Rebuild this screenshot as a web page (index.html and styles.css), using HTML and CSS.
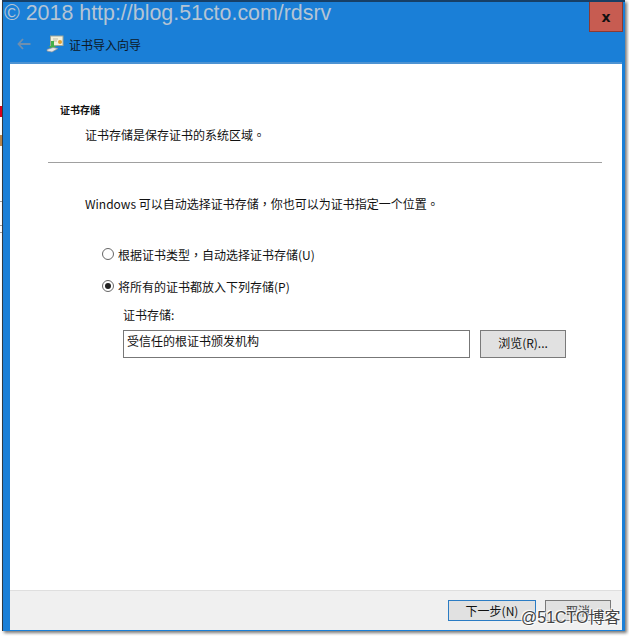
FILE: index.html
```html
<!DOCTYPE html>
<html lang="en">
<head>
  <meta charset="UTF-8" />
  <title>证书导入向导</title>
  <link rel="stylesheet" href="styles.css">
</head>
<body>
  <div class="desk-bit red"></div>
  <div class="desk-bit tan"></div>
  <div class="desk-line l1"></div>
  <div class="desk-line l2"></div>
  <div class="desk-line l3"></div>

  <div class="window">
    <div class="titlebar">
      <button class="close">x</button>
      <div class="nav">
        <svg class="back" width="14" height="12" viewBox="0 0 14 12">
          <path d="M6 1 L1.5 6 L6 11 M2 6 H13.5" fill="none" stroke="#6f8fae" stroke-width="1.8"/>
        </svg>
        <svg class="cert" width="18" height="18" viewBox="0 0 18 18">
          <rect x="4.5" y="1" width="12.5" height="9.5" fill="#f4f1dc" stroke="#9aa59a" stroke-width="1"/>
          <path d="M7 4 H12 M7 6 H11" stroke="#b9bda8" stroke-width="1"/>
          <circle cx="14" cy="7" r="2" fill="#e0a030"/>
          <path d="M8 6 V11 H10.5 L6.5 14 L2.5 11 H5 V6 Z" fill="#45b048"/>
          <path d="M1 14.5 L7 12.5 L12 13.5 L6 17 L1 16 Z" fill="#e4e6e8" stroke="#8b9196" stroke-width="0.7"/>
        </svg>
        <span class="nav-title">证书导入向导</span>
      </div>
    </div>

    <div class="content">
      <div class="head">
        <div class="head-title">证书存储</div>
        <div class="head-sub">证书存储是保存证书的系统区域<span class="punct">。</span></div>
      </div>
      <div class="rule"></div>

      <div class="body-text">Windows 可以自动选择证书存储<span class="punct">，</span>你也可以为证书指定一个位置<span class="punct">。</span></div>

      <div class="options">
        <label class="radio-row"><span class="radio"></span><span>根据证书类型<span class="punct">，</span>自动选择证书存储(U)</span></label>
        <label class="radio-row"><span class="radio on"></span><span>将所有的证书都放入下列存储(P)</span></label>
      </div>

      <div class="store">
        <div class="store-label">证书存储:</div>
        <div class="store-row">
          <div class="store-input">受信任的根证书颁发机构</div>
          <button class="btn browse">浏览(R)...</button>
        </div>
      </div>
    </div>

    <div class="footer">
      <button class="btn next">下一步(N)</button>
      <button class="btn cancel">取消</button>
    </div>
  </div>

  <div class="mark-top">© 2018 http://blog.51cto.com/rdsrv</div>
  <div class="mark-bottom">@51CTO博客</div>
</body>
</html>
```

FILE: styles.css
```css
* {
  box-sizing: border-box;
}

html, body {
  margin: 0;
  padding: 0;
}

body {
  position: relative;
  width: 629px;
  height: 636px;
  overflow: hidden;
  background: #fff;
  font-family: "Noto Sans CJK SC", "Liberation Sans", sans-serif;
  font-size: 12px;
  color: #111;
  padding: 0 4px 5px 2px;
}

button {
  font-family: inherit;
  font-size: 12px;
  color: #111;
  padding: 0;
}

.punct {
  font-family: "Noto Sans CJK TC", sans-serif;
}

.window {
  height: 631px;
  display: flex;
  flex-direction: column;
  background: #1a7fd7;
  border-top: 2px solid #173f66;
  border-left: 1px solid #2f3a44;
  box-shadow: 2px 2px 3px #777;
  padding: 0 3px 1px 7px;
}

.titlebar {
  position: relative;
  height: 62px;
  flex: none;
  border-bottom: 2px solid #4d93d2;
}

.close {
  position: absolute;
  top: 0;
  right: -1px;
  width: 34px;
  height: 30px;
  background: #c75c51;
  border: 1px solid #8a3a32;
  border-top: 0;
  font-family: "DejaVu Sans", sans-serif;
  font-weight: bold;
  font-size: 14px;
  line-height: 26px;
  color: #111;
}

.nav {
  display: flex;
  align-items: center;
  height: 60px;
  padding: 24px 0 0 7px;
}

.back {
  margin-right: 15px;
}

.cert {
  margin-right: 5px;
}

.nav-title {
  color: #0c1826;
}

.content {
  flex: 1;
  background: #fff;
}

.head {
  padding: 39px 0 0 50px;
}

.head-title {
  font-size: 10px;
  font-weight: bold;
  line-height: 14px;
}

.head-sub {
  margin: 9px 0 0 25px;
  line-height: 18px;
}

.rule {
  height: 1px;
  margin: 18px 20px 0 38px;
  background: #a0a0a0;
}

.body-text {
  margin: 32px 0 0 75px;
  line-height: 18px;
}

.options {
  margin: 32px 0 0 92px;
  display: flex;
  flex-direction: column;
  gap: 14px;
}

.radio-row {
  display: flex;
  align-items: center;
  height: 18px;
  gap: 4px;
}

.radio {
  width: 12px;
  height: 12px;
  border: 1px solid #666;
  border-radius: 50%;
  background: #fff;
  display: flex;
  align-items: center;
  justify-content: center;
}

.radio.on::after {
  content: "";
  width: 6px;
  height: 6px;
  border-radius: 50%;
  background: #222;
}

.store {
  margin: 11px 0 0 113px;
}

.store-label {
  line-height: 18px;
}

.store-row {
  display: flex;
  gap: 10px;
  margin-top: 6px;
}

.store-input {
  width: 347px;
  height: 28px;
  border: 1px solid #777;
  padding: 1px 3px;
  line-height: 18px;
}

.btn {
  background: #e1e1e1;
  border: 1px solid #7a7a7a;
}

.browse {
  width: 86px;
  height: 28px;
  padding-bottom: 3px;
}

.footer {
  flex: none;
  height: 40px;
  display: flex;
  justify-content: flex-end;
  align-items: flex-start;
  gap: 9px;
  padding: 9px 11px 0 0;
  background: #f0f0f0;
  border-top: 1px solid #dfdfdf;
}

.next {
  width: 88px;
  height: 21px;
  border: 1px solid #2b7cc4;
}

.cancel {
  width: 66px;
  height: 21px;
  color: #444;
}

.desk-bit {
  position: absolute;
  left: 0;
  width: 2px;
}

.desk-bit.red {
  top: 106px;
  height: 11px;
  background: #d8001c;
}

.desk-bit.tan {
  top: 135px;
  height: 11px;
  background: #b8844a;
}

.desk-line {
  position: absolute;
  left: 0;
  width: 2px;
  height: 1px;
  background: #999;
}

.desk-line.l1 { top: 201px; }
.desk-line.l2 { top: 225px; }
.desk-line.l3 { top: 232px; }

.mark-top {
  position: absolute;
  top: 0;
  left: 4px;
  font-family: "Liberation Sans", sans-serif;
  font-size: 21.4px;
  line-height: 26px;
  color: #b4c4d4;
  white-space: nowrap;
}

.mark-bottom {
  position: absolute;
  top: 608px;
  left: 521px;
  font-family: "Liberation Sans", "Noto Sans CJK SC", sans-serif;
  font-size: 16px;
  line-height: 20px;
  color: #444;
  white-space: nowrap;
  text-shadow: 0 0 2px #fff, 1px 1px 1px #fff, -1px -1px 1px #fff;
}
```
